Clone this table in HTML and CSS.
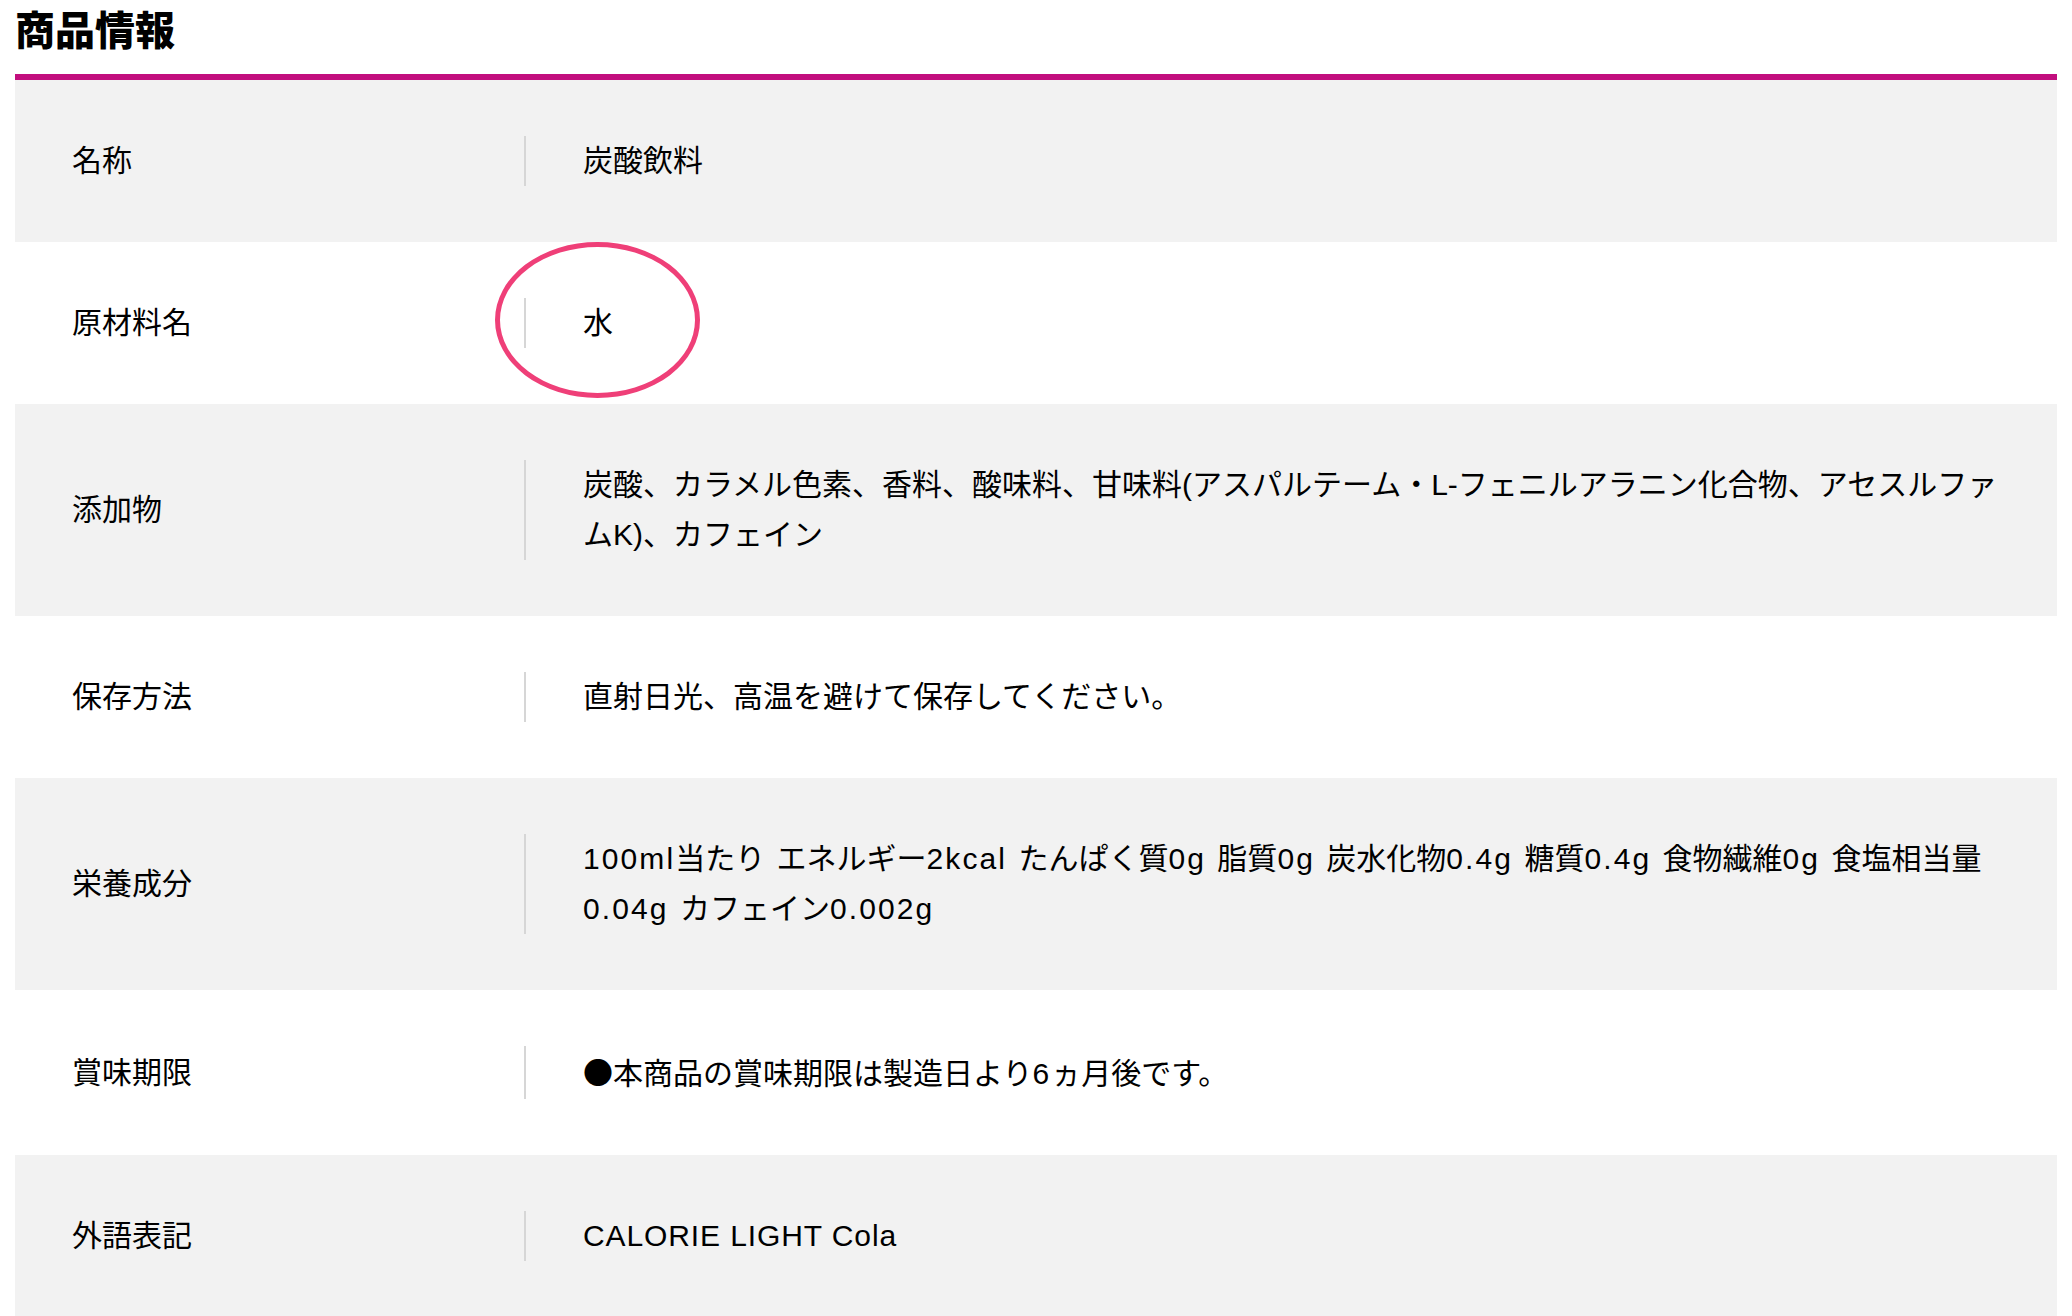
FILE: index.html
```html
<!DOCTYPE html>
<html lang="ja">
<head>
<meta charset="utf-8">
<title>商品情報</title>
<link rel="stylesheet" href="styles.css">
</head>
<body>
<section class="info">
  <h2 class="info-title">商品情報</h2>
  <div class="info-table">
    <div class="row shaded">
      <div class="label">名称</div>
      <div class="value">炭酸飲料</div>
    </div>
    <div class="row">
      <div class="label">原材料名</div>
      <div class="value"><span class="circle"></span>水</div>
    </div>
    <div class="row shaded">
      <div class="label">添加物</div>
      <div class="value">炭酸、カラメル色素、香料、酸味料、甘味料(アスパルテーム・L-フェニルアラニン化合物、アセスルファムK)、カフェイン</div>
    </div>
    <div class="row">
      <div class="label">保存方法</div>
      <div class="value">直射日光、高温を避けて保存してください。</div>
    </div>
    <div class="row shaded">
      <div class="label">栄養成分</div>
      <div class="value value-spaced"><span class="latin">100ml</span>当たり エネルギー<span class="latin">2kcal</span> たんぱく質<span class="latin">0g</span> 脂質<span class="latin">0g</span> 炭水化物<span class="latin">0.4g</span> 糖質<span class="latin">0.4g</span> 食物繊維<span class="latin">0g</span> 食塩相当量<span class="latin">0.04g</span> カフェイン<span class="latin">0.002g</span></div>
    </div>
    <div class="row">
      <div class="label">賞味期限</div>
      <div class="value"><span class="mark">●</span>本商品の賞味期限は製造日より<span class="latin">6</span>ヵ月後です。</div>
    </div>
    <div class="row shaded">
      <div class="label">外語表記</div>
      <div class="value value-en">CALORIE LIGHT Cola</div>
    </div>
  </div>
</section>
</body>
</html>
```

FILE: styles.css
```css
html, body {
  margin: 0;
  padding: 0;
  background: #ffffff;
}

body {
  font-family: "Liberation Sans", "Noto Sans CJK JP", sans-serif;
  color: #000000;
}

.info {
  padding: 0 15px;
}

.info-title {
  margin: 0 0 18px 0;
  font-family: "Noto Sans CJK JP", sans-serif;
  font-size: 40px;
  line-height: 56px;
  font-weight: 900;
}

.info-table {
  border-top: 6px solid #c20e7e;
}

.row {
  display: grid;
  grid-template-columns: 509px 1fr;
  align-items: center;
  padding: 56px 0;
  background: #ffffff;
}

.row.shaded {
  background: #f2f2f2;
}

.label {
  padding-left: 57px;
  font-size: 30px;
  line-height: 50px;
}

.value {
  position: relative;
  border-left: 2px solid #d6d6d6;
  padding-left: 57px;
  padding-right: 40px;
  font-size: 30px;
  line-height: 50px;
}

.value-spaced {
  word-spacing: 3px;
}

.latin {
  letter-spacing: 0.07em;
}

.value-en {
  letter-spacing: 0.03em;
}

.mark {
  font-family: "Noto Sans CJK JP", sans-serif;
}

.circle {
  position: absolute;
  left: -31px;
  top: -56px;
  width: 195px;
  height: 146px;
  border: 5px solid #ef3f78;
  border-radius: 50%;
  pointer-events: none;
}
```
